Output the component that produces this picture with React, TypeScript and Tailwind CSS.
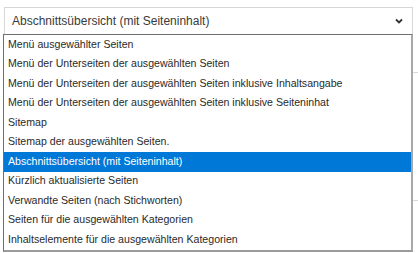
import React from 'react';

const OPTIONS = [
  'Menü ausgewählter Seiten',
  'Menü der Unterseiten der ausgewählten Seiten',
  'Menü der Unterseiten der ausgewählten Seiten inklusive Inhaltsangabe',
  'Menü der Unterseiten der ausgewählten Seiten inklusive Seiteninhat',
  'Sitemap',
  'Sitemap der ausgewählten Seiten.',
  'Abschnittsübersicht (mit Seiteninhalt)',
  'Kürzlich aktualisierte Seiten',
  'Verwandte Seiten (nach Stichworten)',
  'Seiten für die ausgewählten Kategorien',
  'Inhaltselemente für die ausgewählten Kategorien',
];

const SELECTED = 6;

export default function App() {
  return (
    <div className="w-[418px] h-[253px] bg-white overflow-hidden pt-[7px] pl-[3px]" style={{ fontFamily: '"Liberation Sans", Arial, sans-serif' }}>
      <div className="ml-px w-[409px] h-[27px] border border-[#d6d6d6] border-b-0 flex items-center justify-between pl-[7px] pr-[9px] text-[12px] text-[#3a3a3a]">
        <span>Abschnittsübersicht (mit Seiteninhalt)</span>
        <svg width="8" height="6" viewBox="0 0 8 6">
          <path d="M1 1.5 L4 4.5 L7 1.5" fill="none" stroke="#333" strokeWidth="1.8" />
        </svg>
      </div>
      <div className="flex">
        <div className="w-[410px] h-[218px] border border-[#6f6f6f] border-r-[2px] border-r-[#a8a8a8] border-b-[2px] border-b-[#9a9a9a] bg-white text-[10.6px] text-[#2a2a2a]">
          {OPTIONS.map((o, i) => (
            <div
              key={o}
              className={`h-[19.5px] flex items-center pl-[4px] whitespace-nowrap ${i === SELECTED ? 'bg-[#0078d7] text-white' : ''}`}
            >
              {o}
            </div>
          ))}
        </div>
        <div className="flex-1 flex flex-col">
          <div className="h-[38px]" />
          <div className="h-px bg-[#d8d8d8]" />
          <div className="h-[127px]" />
          <div className="h-px bg-[#d8d8d8]" />
        </div>
      </div>
    </div>
  );
}
